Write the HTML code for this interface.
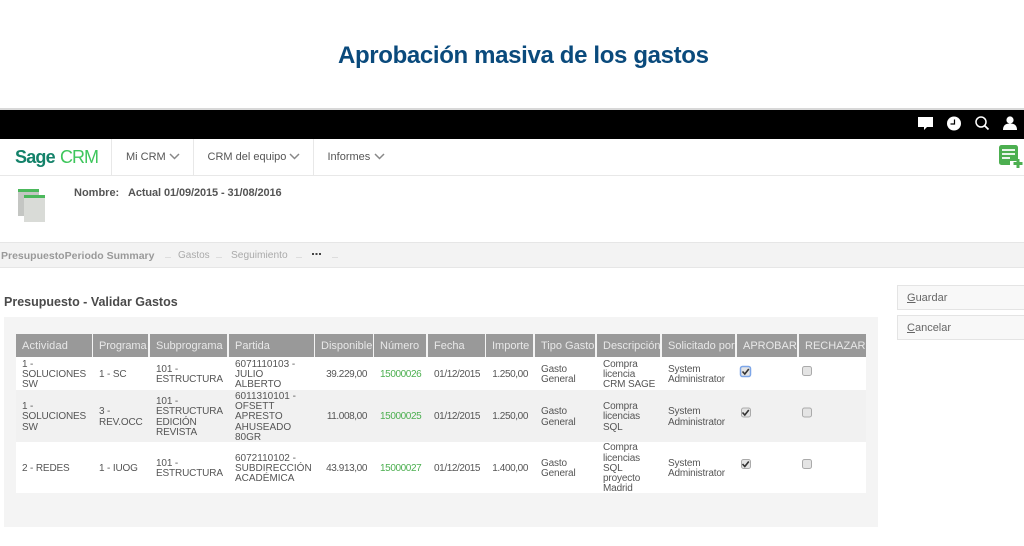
<!DOCTYPE html>
<html lang="es"><head><meta charset="utf-8"><title>Aprobación masiva de los gastos</title>
<style>
html,body{margin:0;padding:0;background:#fff}
#p{position:relative;width:1024px;height:546px;overflow:hidden;background:#fff;font-family:"Liberation Sans",Arial,sans-serif;color:#555;filter:blur(.3px)}
#p div,#p svg{position:absolute}
.t{white-space:nowrap}
.h{top:334px;height:23px;background:#999;color:#e8e8e8;font-size:11px;line-height:25px;white-space:nowrap;overflow:hidden;padding-left:6px;box-sizing:border-box}
.c{display:flex;align-items:center;font-size:10px;line-height:10.3px;color:#555;white-space:nowrap;box-sizing:border-box;padding-left:6px;padding-top:3px;letter-spacing:-.15px}
.r{justify-content:flex-end;padding-left:0;padding-right:6px}
.d{letter-spacing:-.4px}
.q{letter-spacing:0}
.g{color:#4caf50;letter-spacing:-.4px}
</style></head><body><div id="p">
<div class="t" style="left:338px;top:41px;font-size:24px;line-height:30px;font-weight:bold;color:#0a4a7c;letter-spacing:-0.35px">Aprobación masiva de los gastos</div>

<div style="left:0;top:108px;width:1024px;height:3px;background:#d8d8d8"></div>
<div style="left:0;top:110px;width:1024px;height:29px;background:#000"></div>
<svg style="left:917px;top:114px" width="100" height="20" viewBox="0 0 100 20">
<path d="M1 3h15v10h-6l-3 3v-3H1z" fill="#fff"/>
<circle cx="37" cy="9.5" r="7" fill="#fff"/><path d="M37.500 5.500v4.500h-4" fill="none" stroke="#000" stroke-width="1.200"/>
<circle cx="64" cy="8" r="5" fill="none" stroke="#fff" stroke-width="1.500"/><path d="M67.500 11.500l4 4" stroke="#fff" stroke-width="1.800"/>
<circle cx="93" cy="6" r="3.600" fill="#fff"/><path d="M86 16c0-5 3-6.500 7-6.500s7 1.500 7 6.500z" fill="#fff"/>
</svg>

<div style="left:0;top:175px;width:1024px;height:1px;background:#e8e8e8"></div>
<div style="left:111px;top:139px;width:1px;height:36px;background:#e8e8e8"></div>
<div style="left:193px;top:139px;width:1px;height:36px;background:#e8e8e8"></div>
<div style="left:313px;top:139px;width:1px;height:36px;background:#e8e8e8"></div>
<div class="t" style="left:15px;top:146px;font-size:18px;line-height:22px;font-weight:bold;color:#14826a;letter-spacing:-.8px">Sage</div>
<div class="t" style="left:60px;top:146px;font-size:18px;line-height:22px;color:#3ec65c;letter-spacing:-1px">CRM</div>
<div class="t" style="left:126px;top:150px;font-size:11px;line-height:15px;color:#555">Mi CRM</div>
<div class="t" style="left:207.500px;top:150px;font-size:11px;line-height:15px;color:#555">CRM del equipo</div>
<div class="t" style="left:327.500px;top:150px;font-size:11px;line-height:15px;color:#555">Informes</div>
<svg style="left:0;top:150px" width="400" height="14" viewBox="0 0 400 14">
<g fill="none" stroke="#888" stroke-width="1.500"><path d="M170 4l4.500 4.500L179 4"/><path d="M290 4l4.500 4.500L299 4"/><path d="M375 4l4.500 4.500L384 4"/></g>
</svg>
<svg style="left:998px;top:145px" width="26" height="24" viewBox="0 0 26 24">
<rect x="1" y="0" width="19" height="20" rx="2.500" fill="#4caf50"/>
<path d="M4 5h13M4 9h13M4 13h8" stroke="#fff" stroke-width="1.800"/>
<path d="M12 16h10v7H12z" fill="#fff"/>
<path d="M20 14v9M15.500 18.500h9" stroke="#4caf50" stroke-width="3"/>
</svg>

<div style="left:18px;top:189px;width:21px;height:27px;background:#c4c6c3"></div>
<div style="left:18px;top:189px;width:21px;height:3px;background:#4cb85c"></div>
<div style="left:24px;top:195px;width:21px;height:27px;background:#d9dbd7"></div>
<div style="left:24px;top:195px;width:21px;height:3px;background:#4cb85c"></div>
<div class="t" style="left:74px;top:186px;font-size:11px;line-height:14px;font-weight:bold;color:#555">Nombre:</div>
<div class="t" style="left:128px;top:186px;font-size:11px;line-height:14px;font-weight:bold;color:#555;letter-spacing:-.1px">Actual 01/09/2015 - 31/08/2016</div>

<div style="left:0;top:242px;width:1024px;height:26px;background:#f3f3f3;border-top:1px solid #e6e6e6;border-bottom:1px solid #e6e6e6;box-sizing:border-box"></div>
<div class="t" style="left:1px;top:249px;font-size:10.5px;line-height:14px;font-weight:bold;color:#999">PresupuestoPeriodo Summary</div>
<div class="t" style="left:178px;top:249px;font-size:10px;line-height:14px;color:#aaa">Gastos</div>
<div class="t" style="left:231px;top:249px;font-size:10.2px;line-height:14px;color:#aaa">Seguimiento</div>
<div style="left:312px;top:253px;width:10px;height:2px;background:repeating-linear-gradient(90deg,#444 0 2px,transparent 2px 3.500px)"></div>
<div style="left:165px;top:257px;width:6px;height:1px;background:#ddd"></div>
<div style="left:216px;top:257px;width:6px;height:1px;background:#ddd"></div>
<div style="left:296px;top:257px;width:6px;height:1px;background:#ddd"></div>
<div style="left:332px;top:257px;width:6px;height:1px;background:#ddd"></div>

<div class="t" style="left:4px;top:295px;font-size:12.5px;line-height:15px;font-weight:bold;color:#4a4a4a">Presupuesto - Validar Gastos</div>

<div style="left:897px;top:285px;width:127px;height:25px;background:#f8f8f8;border:1px solid #e4e4e4;border-right:0;box-sizing:border-box"></div>
<div style="left:897px;top:315px;width:127px;height:25px;background:#f8f8f8;border:1px solid #e4e4e4;border-right:0;box-sizing:border-box"></div>
<div class="t" style="left:907px;top:291px;font-size:11px;line-height:15px;color:#666"><u>G</u>uardar</div>
<div class="t" style="left:907px;top:321px;font-size:11px;line-height:15px;color:#666"><u>C</u>ancelar</div>

<div style="left:4px;top:317px;width:874px;height:210px;background:#f4f4f4"></div>
<div style="left:16px;top:357px;width:850px;height:33px;background:#fff"></div>
<div style="left:16px;top:390px;width:850px;height:52px;background:#f1f1f1"></div>
<div style="left:16px;top:442px;width:850px;height:51px;background:#fff"></div>

<div class="h" style="left:16px;width:76px;letter-spacing:.15px">Actividad</div>
<div class="h" style="left:93px;width:55px;letter-spacing:-.1px">Programa</div>
<div class="h" style="left:150px;width:77px">Subprograma</div>
<div class="h" style="left:229px;width:85px">Partida</div>
<div class="h" style="left:315px;width:58px">Disponible</div>
<div class="h" style="left:374px;width:52px">Número</div>
<div class="h" style="left:428px;width:57px">Fecha</div>
<div class="h" style="left:486px;width:47px">Importe</div>
<div class="h" style="left:535px;width:60px">Tipo Gasto</div>
<div class="h" style="left:597px;width:63px">Descripción</div>
<div class="h" style="left:662px;width:73px">Solicitado por</div>
<div class="h" style="left:737px;width:60px">APROBAR</div>
<div class="h" style="left:799px;width:67px">RECHAZAR</div>

<div class="c" style="left:16px;top:357px;width:76px;height:33px">1 -<br>SOLUCIONES<br>SW</div>
<div class="c" style="left:93px;top:357px;width:55px;height:33px">1 - SC</div>
<div class="c" style="left:150px;top:357px;width:77px;height:33px">101 -<br>ESTRUCTURA</div>
<div class="c q" style="left:229px;top:357px;width:85px;height:33px">6071110103 -<br>JULIO<br>ALBERTO</div>
<div class="c r d" style="left:315px;top:357px;width:58px;height:33px">39.229,00</div>
<div class="c g" style="left:374px;top:357px;width:52px;height:33px">15000026</div>
<div class="c d" style="left:428px;top:357px;width:57px;height:33px">01/12/2015</div>
<div class="c r d" style="left:486px;top:357px;width:47px;height:33px;padding-right:5px">1.250,00</div>
<div class="c" style="left:535px;top:357px;width:60px;height:33px">Gasto<br>General</div>
<div class="c" style="left:597px;top:357px;width:63px;height:33px">Compra<br>licencia<br>CRM SAGE</div>
<div class="c" style="left:662px;top:357px;width:73px;height:33px">System<br>Administrator</div>

<div class="c" style="left:16px;top:390px;width:76px;height:52px">1 -<br>SOLUCIONES<br>SW</div>
<div class="c" style="left:93px;top:390px;width:55px;height:52px">3 -<br>REV.OCC</div>
<div class="c" style="left:150px;top:390px;width:77px;height:52px">101 -<br>ESTRUCTURA<br>EDICIÓN<br>REVISTA</div>
<div class="c q" style="left:229px;top:390px;width:85px;height:52px">6011310101 -<br>OFSETT<br>APRESTO<br>AHUSEADO<br>80GR</div>
<div class="c r d" style="left:315px;top:390px;width:58px;height:52px">11.008,00</div>
<div class="c g" style="left:374px;top:390px;width:52px;height:52px">15000025</div>
<div class="c d" style="left:428px;top:390px;width:57px;height:52px">01/12/2015</div>
<div class="c r d" style="left:486px;top:390px;width:47px;height:52px;padding-right:5px">1.250,00</div>
<div class="c" style="left:535px;top:390px;width:60px;height:52px">Gasto<br>General</div>
<div class="c" style="left:597px;top:390px;width:63px;height:52px">Compra<br>licencias<br>SQL</div>
<div class="c" style="left:662px;top:390px;width:73px;height:52px">System<br>Administrator</div>

<div class="c" style="left:16px;top:442px;width:76px;height:51px">2 - REDES</div>
<div class="c" style="left:93px;top:442px;width:55px;height:51px">1 - IUOG</div>
<div class="c" style="left:150px;top:442px;width:77px;height:51px">101 -<br>ESTRUCTURA</div>
<div class="c q" style="left:229px;top:442px;width:85px;height:51px">6072110102 -<br>SUBDIRECCIÓN<br>ACADÉMICA</div>
<div class="c r d" style="left:315px;top:442px;width:58px;height:51px">43.913,00</div>
<div class="c g" style="left:374px;top:442px;width:52px;height:51px">15000027</div>
<div class="c d" style="left:428px;top:442px;width:57px;height:51px">01/12/2015</div>
<div class="c r d" style="left:486px;top:442px;width:47px;height:51px;padding-right:5px">1.400,00</div>
<div class="c" style="left:535px;top:442px;width:60px;height:51px">Gasto<br>General</div>
<div class="c" style="left:597px;top:442px;width:63px;height:51px">Compra<br>licencias<br>SQL<br>proyecto<br>Madrid</div>
<div class="c" style="left:662px;top:442px;width:73px;height:51px">System<br>Administrator</div>

<svg style="left:735px;top:357px" width="90" height="136" viewBox="0 0 90 136">
<g stroke="#aaa" fill="#e4e4e4">
<rect x="5.500" y="9.500" width="10" height="10" rx="2" stroke="#7da6e8" stroke-width="1.500"/>
<rect x="6.500" y="51" width="9" height="9" rx="2"/>
<rect x="6.500" y="102.500" width="9" height="9" rx="2"/>
<rect x="67.500" y="9.500" width="9" height="9" rx="2"/>
<rect x="67.500" y="51" width="9" height="9" rx="2"/>
<rect x="67.500" y="102.500" width="9" height="9" rx="2"/>
</g>
<g fill="none" stroke="#333" stroke-width="1.600">
<path d="M7.500 14.500l2.300 2.500 4-5"/><path d="M7.500 55.500l2.300 2.500 4-5"/><path d="M7.500 107l2.300 2.500 4-5"/>
</g>
</svg>
</div></body></html>
